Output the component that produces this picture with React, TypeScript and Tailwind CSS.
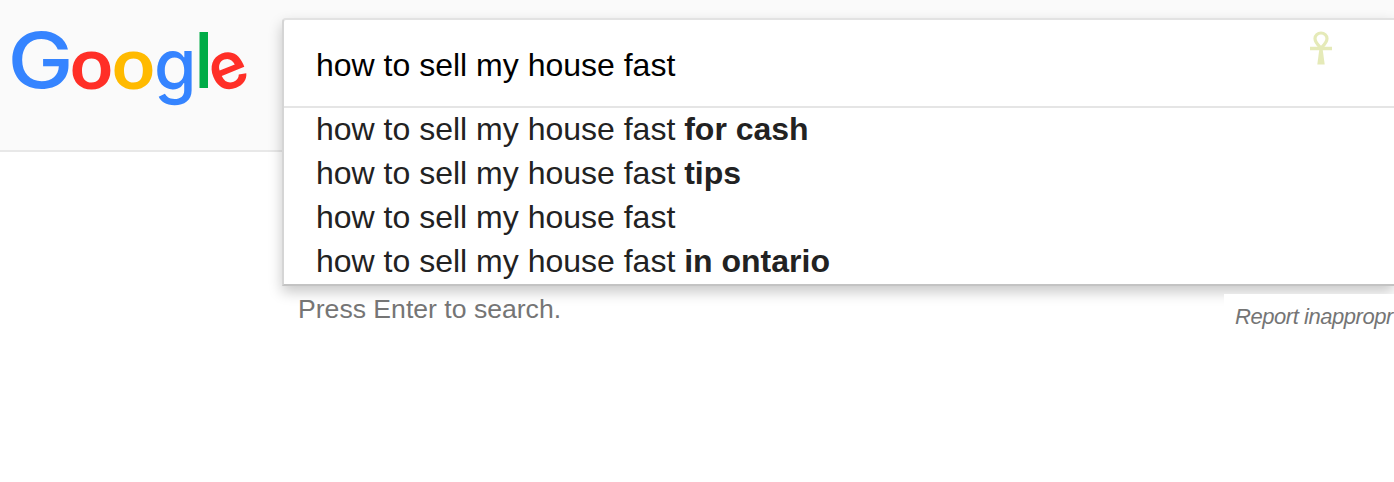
const QUERY = 'how to sell my house fast';

const suggestions = ['for cash', 'tips', '', 'in ontario'];

// every letter gets its own box: the translate is the baseline origin
const letters = [
    { char: 'G', fill: '#3584ff', transform: 'translate(7.6 88.2) scale(1.14 1)', size: 77.5, weight: 500, font: 'Inter, sans-serif' },
    { char: 'o', fill: '#ff2f27', transform: 'translate(70 88.5) scale(1.03 1)', size: 72.5, weight: 700, font: 'Lato, sans-serif' },
    { char: 'o', fill: '#ffba00', transform: 'translate(112 88.5) scale(1.03 1)', size: 72.5, weight: 700, font: 'Lato, sans-serif' },
    { char: 'g', fill: '#3584ff', transform: 'translate(154 90.2) scale(1.01 1.05)', size: 68, weight: 500, font: 'Inter, sans-serif' },
    { char: 'l', fill: '#00ac47', transform: 'translate(195.2 88) scale(0.9 0.98)', size: 76, weight: 700, font: 'Lato, sans-serif' },
    { char: 'e', fill: '#ff2f27', transform: 'translate(217.5 94.6) rotate(-22) scale(0.97 1)', size: 66, weight: 600, font: 'Inter, sans-serif' },
];

function Logo() {
    return (
        <svg width="282" height="150" viewBox="0 0 282 150" className="shrink-0" aria-label="Google">
            {letters.map((l, i) => (
                <text
                    key={i}
                    transform={l.transform}
                    fill={l.fill}
                    fontSize={l.size}
                    fontWeight={l.weight}
                    fontFamily={l.font}
                >
                    {l.char}
                </text>
            ))}
        </svg>
    );
}

function AnkhIcon() {
    return (
        <svg width="24" height="36" viewBox="0 0 24 36" className="blur-[0.6px]" fill="none" stroke="#e5eab8">
            <path d="M12 17C9 14 6 11.500 6 7.500a6 5.500 0 0 1 12 0C18 11.500 15 14 12 17Z" strokeWidth="3.200" />
            <path d="M1 17.500h22" strokeWidth="3.500" />
            <path d="M10.500 17h3l2.200 16.500h-7.400Z" fill="#e5eab8" stroke="none" />
        </svg>
    );
}

function SearchBox() {
    return (
        <div className="h-[268px] w-full rounded-tl border-2 border-r-0 border-t-[#e2e2e2] border-l-[#d5d5d5] border-b-[#c3c3c3] bg-white shadow-[0_6px_14px_rgba(0,0,0,0.22)]">
            <div className="flex h-[88px] items-center justify-between border-b-2 border-[#e5e5e5] pr-[61px] pl-8">
                <span className="pt-1 text-[32px] leading-[44px] text-black">{QUERY}</span>
                <div className="-mt-7">
                    <AnkhIcon />
                </div>
            </div>
            <ul className="-mt-px pl-8 text-[32px] leading-[44px] text-[#222]">
                {suggestions.map((s) => (
                    <li key={s} className="h-11 whitespace-pre">
                        {QUERY} <b>{s}</b>
                    </li>
                ))}
            </ul>
        </div>
    );
}

export default function App() {
    return (
        <main className="h-[482px] w-full overflow-hidden bg-white font-['Liberation_Sans',Arial,sans-serif]">
            <header className="flex h-[152px] items-start border-b-2 border-[#e8e8e8] bg-[#fafafa]">
                <Logo />
                <div className="min-w-0 flex-1 pt-[18px]">
                    <SearchBox />
                </div>
            </header>
            <div className="flex items-start justify-between pt-[134px] pl-[298px] text-[#757575]">
                <p className="relative mt-2 text-[26.6px] leading-[30px]">Press Enter to search.</p>
                <div className="relative mt-2 h-11 w-[170px] bg-white pt-px pl-[11px] text-[22px] leading-[44px] tracking-[-0.45px] whitespace-nowrap italic">
                    Report inappropr
                </div>
            </div>
        </main>
    );
}
